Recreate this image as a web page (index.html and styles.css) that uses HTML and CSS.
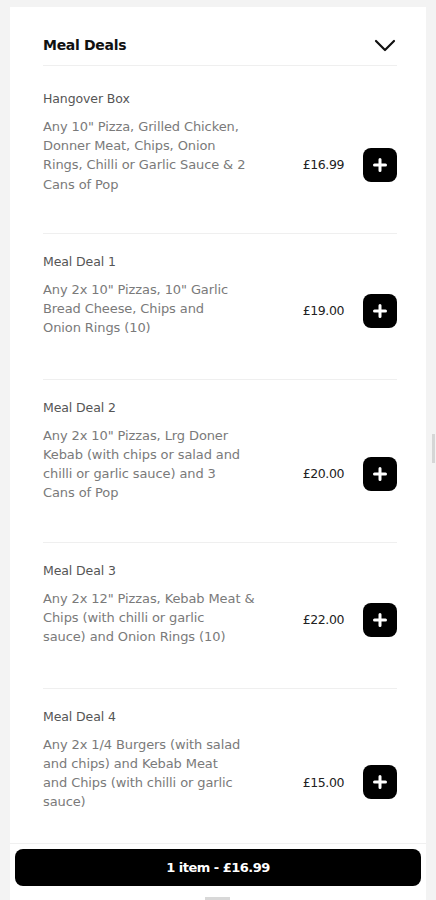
FILE: index.html
```html
<!DOCTYPE html>
<html lang="en">
<head>
    <meta charset="UTF-8">
    <meta name="viewport" content="width=device-width, initial-scale=1.0">
    <link rel="stylesheet" href="styles.css">
</head>
<body>
    <div class="panel">
        <div class="panel-head">
            <h2>Meal Deals</h2>
            <svg class="chevron" width="22" height="13" viewBox="0 0 22 13">
                <path d="M2 2 L11 11 L20 2" fill="none" stroke="#111" stroke-width="2.2" stroke-linecap="round" stroke-linejoin="round"/>
            </svg>
        </div>

        <div class="item first">
            <div class="info">
                <div class="name">Hangover Box</div>
                <div class="desc">Any 10" Pizza, Grilled Chicken,<br>Donner Meat, Chips, Onion<br>Rings, Chilli or Garlic Sauce &amp; 2<br>Cans of Pop</div>
            </div>
            <div class="buy">
                <span class="price">£16.99</span>
                <button class="add"><svg width="14" height="14" viewBox="0 0 14 14"><path d="M7 1.5V12.5M1.5 7H12.5" stroke="#fff" stroke-width="3" stroke-linecap="round"/></svg></button>
            </div>
        </div>

        <div class="item">
            <div class="info">
                <div class="name">Meal Deal 1</div>
                <div class="desc">Any 2x 10" Pizzas, 10" Garlic<br>Bread Cheese, Chips and<br>Onion Rings (10)</div>
            </div>
            <div class="buy">
                <span class="price">£19.00</span>
                <button class="add"><svg width="14" height="14" viewBox="0 0 14 14"><path d="M7 1.5V12.5M1.5 7H12.5" stroke="#fff" stroke-width="3" stroke-linecap="round"/></svg></button>
            </div>
        </div>

        <div class="item">
            <div class="info">
                <div class="name">Meal Deal 2</div>
                <div class="desc">Any 2x 10" Pizzas, Lrg Doner<br>Kebab (with chips or salad and<br>chilli or garlic sauce) and 3<br>Cans of Pop</div>
            </div>
            <div class="buy">
                <span class="price">£20.00</span>
                <button class="add"><svg width="14" height="14" viewBox="0 0 14 14"><path d="M7 1.5V12.5M1.5 7H12.5" stroke="#fff" stroke-width="3" stroke-linecap="round"/></svg></button>
            </div>
        </div>

        <div class="item">
            <div class="info">
                <div class="name">Meal Deal 3</div>
                <div class="desc">Any 2x 12" Pizzas, Kebab Meat &amp;<br>Chips (with chilli or garlic<br>sauce) and Onion Rings (10)</div>
            </div>
            <div class="buy">
                <span class="price">£22.00</span>
                <button class="add"><svg width="14" height="14" viewBox="0 0 14 14"><path d="M7 1.5V12.5M1.5 7H12.5" stroke="#fff" stroke-width="3" stroke-linecap="round"/></svg></button>
            </div>
        </div>

        <div class="item">
            <div class="info">
                <div class="name">Meal Deal 4</div>
                <div class="desc">Any 2x 1/4 Burgers (with salad<br>and chips) and Kebab Meat<br>and Chips (with chilli or garlic<br>sauce)</div>
            </div>
            <div class="buy">
                <span class="price">£15.00</span>
                <button class="add"><svg width="14" height="14" viewBox="0 0 14 14"><path d="M7 1.5V12.5M1.5 7H12.5" stroke="#fff" stroke-width="3" stroke-linecap="round"/></svg></button>
            </div>
        </div>
    </div>

    <div class="basket">
        <button class="basket-btn">1 item - £16.99</button>
    </div>
    <div class="scroll-thumb"></div>
    <div class="home-bar"></div>
</body>
</html>
```

FILE: styles.css
```css
body {
    background-color: #f3f3f3;
    font-family: "DejaVu Sans", sans-serif;
    margin: 0;
    padding: 0;
}
.panel {
    background: #fff;
    margin: 7px 10px 0;
    padding: 0 29px 60px 33px;
    min-height: 900px;
}
.panel-head {
    display: flex;
    justify-content: space-between;
    align-items: center;
    height: 58px;
    border-bottom: 1px solid #efefef;
}
.panel-head h2 {
    margin: 0;
    padding-top: 18px;
    font-size: 14px;
    font-weight: 600;
    color: #111;
    letter-spacing: -0.3px;
}
.chevron {
    margin-top: 18px;
    margin-right: 1px;
}
.item {
    display: flex;
    align-items: flex-end;
    padding: 18px 0 39px;
    border-bottom: 1px solid #efefef;
}
.item.first {
    padding-top: 23px;
}
.info {
    width: 235px;
}
.name {
    font-size: 12.5px;
    line-height: 19px;
    color: #555;
    margin-bottom: 9px;
    letter-spacing: -0.1px;
}
.desc {
    font-size: 13px;
    line-height: 19.2px;
    color: #7a7a7a;
    letter-spacing: -0.1px;
    white-space: nowrap;
    min-height: 60px;
}
.buy {
    margin-left: auto;
    display: flex;
    align-items: center;
    gap: 19px;
    padding-bottom: 12px;
}
.price {
    font-size: 12.5px;
    color: #222;
    letter-spacing: -0.4px;
}
.add {
    width: 34px;
    height: 34px;
    border: none;
    border-radius: 8px;
    background: #000;
    padding: 0;
    display: flex;
    align-items: center;
    justify-content: center;
}
.basket {
    position: fixed;
    left: 10px;
    right: 10px;
    bottom: 9px;
    height: 48px;
    background: #fff;
    border-top: 1px solid #f0f0f0;
    padding: 5px 5px 0;
    box-sizing: border-box;
}
.basket-btn {
    width: 100%;
    height: 37px;
    border: none;
    border-radius: 8px;
    background: #000;
    color: #fff;
    font-family: "DejaVu Sans", sans-serif;
    font-size: 13px;
    font-weight: bold;
    letter-spacing: -0.5px;
}
.scroll-thumb {
    position: fixed;
    right: 1px;
    top: 434px;
    width: 3px;
    height: 29px;
    background: #d6d6d6;
}
.home-bar {
    position: fixed;
    left: 205px;
    bottom: 0;
    width: 25px;
    height: 3px;
    background: #d8d8d8;
}
```
